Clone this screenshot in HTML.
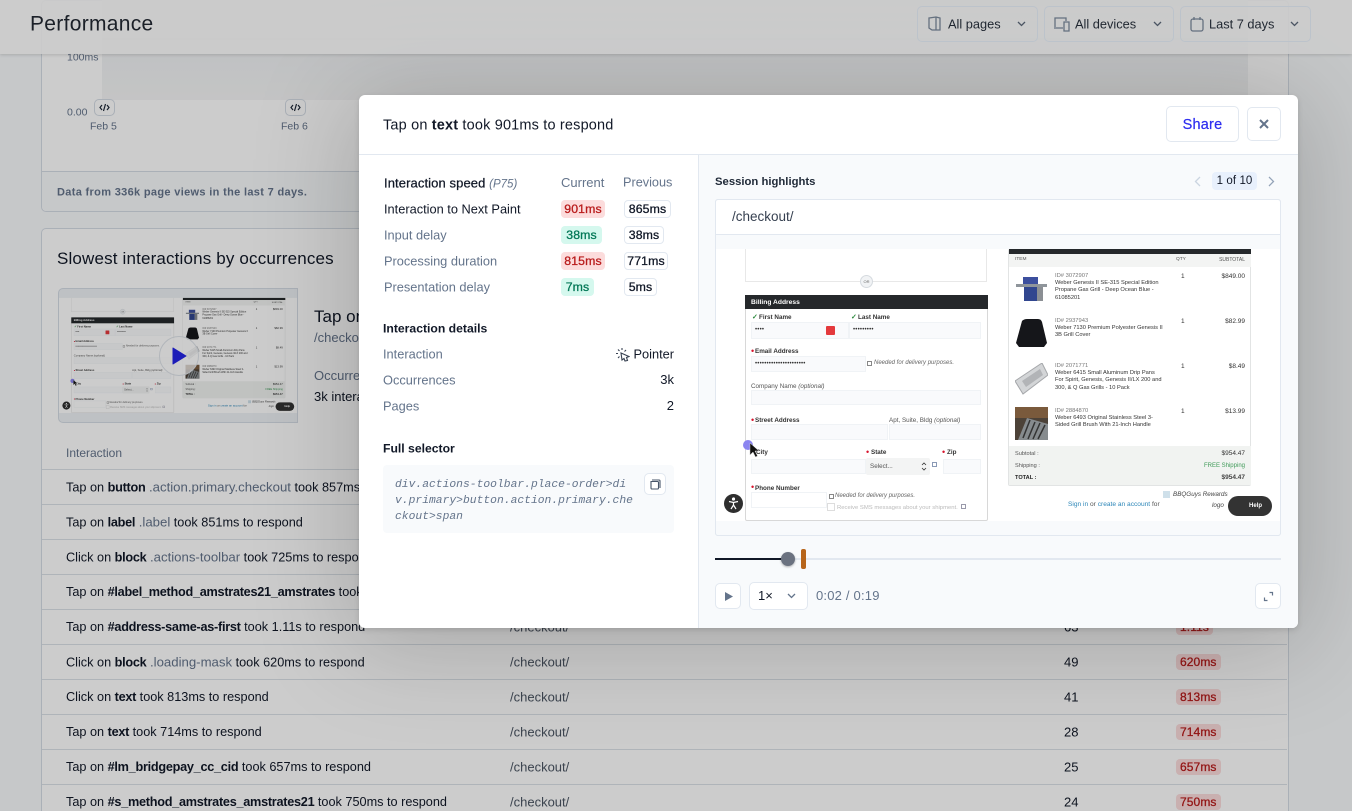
<!DOCTYPE html>
<html><head><meta charset="utf-8"><title>Performance</title>
<style>
*{box-sizing:border-box}
html,body{margin:0;padding:0;width:1352px;height:811px;overflow:hidden;background:#f8fafc;font-family:"Liberation Sans",sans-serif;color:#111827;font-size:13px}
#root{position:relative;width:1352px;height:811px;overflow:hidden;background:#f8fafc}
.t{position:absolute;white-space:nowrap;transform:translateY(-50%);line-height:1.2;letter-spacing:0}
.b{position:absolute}
b{font-weight:700}
.g{color:#64748b}
.row{position:absolute;left:42px;width:1245px;height:35px;border-bottom:1px solid #dbe1e8;font-size:12.700px}
.row b{letter-spacing:-.27px}
.row .g{font-size:13.200px}
.row .c1,.row .c2,.row .c3{position:absolute;top:50%;transform:translateY(-50%);white-space:nowrap}
.row .c1{left:24px}.row .c2{left:468px;color:#4b5563;font-size:13px}.row .c3{left:1022px;font-size:13px}
.row .bd{position:absolute;left:1134px;top:9px;height:16px;line-height:16px;padding:0 4px;border-radius:4px;background:#fcdcdc;color:#b91c1c;font-size:12px;-webkit-text-stroke:.3px #b91c1c;letter-spacing:.1px}
.bd2{position:absolute;height:18px;line-height:18px;border-radius:4px;font-size:12.300px;text-align:center;transform:translateY(-50%);-webkit-text-stroke:.3px currentColor;letter-spacing:.1px}
.red{background:#fcdcdc;color:#b91c1c}.grn{background:#d5f8ee;color:#047857}
.pv{background:#fff;border:1px solid #e2e8f0;color:#111827;line-height:16px}
.btn{position:absolute;background:#fff;border:1px solid #e2e8f0;border-radius:5px}
.flt{position:absolute;top:6px;height:36px;border:1px solid #bcc3cb;border-radius:5px}
.rp{position:absolute;overflow:hidden;background:#f8fafc;width:564px;height:300px;font-size:6px;color:#333;transform-origin:0 0}
.rp div{position:absolute}
.rp .s{position:absolute;left:0;right:0;top:14px;height:272px;background:#fff}
.rp .x{white-space:nowrap;line-height:8px}
.rp .i{background:#f9fafc;border:1px solid #f0f3f6}
.rp .l{font-weight:700;color:#333;font-size:6.300px}
.rp .o{color:#555;font-size:6.300px}
.rp .n{font-style:italic;color:#666;font-size:6px}
.rp .d{color:#d8132c;font-size:9px}
.rp .id{font-size:5.800px;color:#777;left:339px}
.rp .p{font-size:5.700px;line-height:7.300px;left:339px}
.rp .q{font-size:6.500px;left:465px}
.rp .m{font-size:6.500px;right:35px}
</style></head><body><div id="root">

<!-- PAGE -->
<div class="b" style="left:41px;top:0;width:1248px;height:212px;background:#fff;border:1px solid #d5dce5;border-radius:5px"></div>
<div class="b" style="left:102px;top:0;width:1146px;height:100px;background:linear-gradient(#eceef0,#f5f6f7)"></div>
<div class="b" style="left:102px;top:38px;width:1146px;height:2px;background:#e3e6ea"></div>
<div class="t g" style="left:67px;top:58px;font-size:10.500px">100ms</div>
<div class="t g" style="left:67px;top:113px;font-size:10.500px">0.00</div>
<div class="btn" style="left:94px;top:99px;width:21px;height:17px;border-color:#d5dce5"><svg width="19" height="15" viewBox="0 0 19 15" fill="none" stroke="#1f2937" stroke-width="1.2"><path d="M7 5 5 7.5 7 10M12 5l2 2.500-2 2.500M10.500 4 8.500 11"/></svg></div>
<div class="btn" style="left:285px;top:99px;width:21px;height:17px;border-color:#d5dce5"><svg width="19" height="15" viewBox="0 0 19 15" fill="none" stroke="#1f2937" stroke-width="1.2"><path d="M7 5 5 7.5 7 10M12 5l2 2.500-2 2.500M10.500 4 8.500 11"/></svg></div>
<div class="t g" style="left:90px;top:127px;font-size:10.500px">Feb 5</div>
<div class="t g" style="left:281px;top:127px;font-size:10.500px">Feb 6</div>
<div class="b" style="left:42px;top:171px;width:1246px;height:40px;background:#f8fafc;border-top:1px solid #d5dce5;border-radius:0 0 5px 5px"></div>
<div class="t" style="left:57px;top:193px;font-size:11px;font-weight:700;color:#64748b;letter-spacing:.33px">Data from 336k page views in the last 7 days.</div>

<div class="b" style="left:41px;top:228px;width:1248px;height:583px;background:#fff;border:1px solid #d5dce5;border-bottom:0;border-radius:5px 5px 0 0"></div>
<div class="t" style="left:57px;top:259px;font-size:17px;letter-spacing:.16px">Slowest interactions by occurrences</div>

<div class="b" style="left:58px;top:288px;width:240px;height:135px;background:#eef2f6;border:1px solid #d5dce5;border-radius:5px 0 0 5px;overflow:hidden">
  <div class="rp" style="left:0;top:3px;transform:scale(.423);background:#eef2f6">
  <div class="s"></div>
  <div style="left:29px;top:14px;width:242px;height:33px;border:1px solid #e8e8e8;border-top:0"></div>
  <div class="x" style="left:144px;top:40px;width:13px;height:13px;border-radius:50%;border:1px solid #d5dadf;background:#f1f3f5;text-align:center;line-height:11px;font-size:4px;color:#666">OR</div>
  <div style="left:29px;top:60px;width:243px;height:226px;border:1px solid #d8d8d8;border-radius:2px"></div>
  <div style="left:29px;top:60px;width:243px;height:14px;background:#25282b"></div>
  <div class="x" style="left:35px;top:64px;color:#fff;font-weight:700;font-size:6.700px">Billing Address</div>
  <div class="x" style="left:36px;top:79px;color:#2d8a3e;font-weight:700;font-size:7px">✓</div>
  <div class="x l" style="left:43px;top:79px">First Name</div>
  <div class="x" style="left:135px;top:79px;color:#2d8a3e;font-weight:700;font-size:7px">✓</div>
  <div class="x l" style="left:142px;top:79px">Last Name</div>
  <div class="i" style="left:35px;top:87px;width:98px;height:17px"></div>
  <div class="i" style="left:133px;top:87px;width:132px;height:17px"></div>
  <div class="x" style="left:39px;top:91px;letter-spacing:.2px">••••</div>
  <div class="x" style="left:137px;top:91px;letter-spacing:.2px">•••••••••</div>
  <div style="left:110px;top:91px;width:9px;height:9px;background:#e4393c;border-radius:1px"></div>
  <div class="x d" style="left:35px;top:112px">•</div>
  <div class="x l" style="left:39px;top:113px">Email Address</div>
  <div class="i" style="left:35px;top:121px;width:115px;height:16px"></div>
  <div class="x" style="left:39px;top:125px;letter-spacing:.2px">••••••••••••••••••••••</div>
  <div style="left:151px;top:126px;width:5px;height:5px;border:1px solid #888"></div>
  <div class="x n" style="left:158px;top:124px">Needed for delivery purposes.</div>
  <div class="x o" style="left:35px;top:148px">Company Name <i>(optional)</i></div>
  <div class="i" style="left:35px;top:155px;width:230px;height:15px"></div>
  <div class="x d" style="left:35px;top:181px">•</div>
  <div class="x l" style="left:39px;top:182px">Street Address</div>
  <div class="x o" style="left:173px;top:182px">Apt, Suite, Bldg <i>(optional)</i></div>
  <div class="i" style="left:35px;top:189px;width:137px;height:16px"></div>
  <div class="i" style="left:173px;top:189px;width:92px;height:16px"></div>
  <div class="x l" style="left:40px;top:214px">City</div>
  <div class="x d" style="left:150px;top:213px">•</div>
  <div class="x l" style="left:155px;top:214px">State</div>
  <div class="x d" style="left:226px;top:213px">•</div>
  <div class="x l" style="left:231px;top:214px">Zip</div>
  <div class="i" style="left:35px;top:224px;width:115px;height:15px"></div>
  <div style="left:150px;top:223px;width:64px;height:17px;background:#f3f4f4;border-radius:2px"></div>
  <div class="x o" style="left:154px;top:228px">Select...</div>
  <svg style="position:absolute;left:205px;top:226px" width="6" height="11" fill="none" stroke="#333" stroke-width=".8"><path d="M1 4l2-2 2 2M1 7l2 2 2-2"/></svg>
  <div style="left:216px;top:227px;width:5px;height:5px;border:1px solid #8a99b5"></div>
  <div class="i" style="left:227px;top:224px;width:38px;height:15px"></div>
  <div class="x d" style="left:35px;top:248px">•</div>
  <div class="x l" style="left:39px;top:250px">Phone Number</div>
  <div class="i" style="left:35px;top:257px;width:76px;height:16px;background:#fff"></div>
  <div style="left:113px;top:259px;width:5px;height:5px;border:1px solid #888"></div>
  <div class="x n" style="left:119px;top:257px">Needed for delivery purposes.</div>
  <div style="left:111px;top:268px;width:8px;height:8px;border:1px solid #ddd"></div>
  <div class="x" style="left:121px;top:269px;color:#bbb;font-size:5.900px">Receive SMS messages about your shipment.</div>
  <div style="left:245px;top:269px;width:5px;height:5px;border:1px solid #99a"></div>
  <div style="left:8px;top:259px;width:19px;height:19px;border-radius:50%;background:#2e2e2e"></div>
  <svg style="position:absolute;left:10px;top:261px" width="15" height="15" fill="none" stroke="#fff" stroke-width="1.200"><circle cx="7.500" cy="3" r="1" fill="#fff"/><path d="M3 5.500 7.500 6.500 12 5.500M7.500 6.500V9M7.500 9 5 13M7.500 9 10 13"/></svg>
  <div style="left:27px;top:205px;width:10px;height:10px;border-radius:50%;background:#8b85f0"></div>
  <svg style="position:absolute;left:32px;top:207px" width="12" height="17"><path d="M2 1V13L5 10 7.500 15 9.500 14 7 9H11z" fill="#111" stroke="#ccc" stroke-width=".5"/></svg>
  <div style="left:292px;top:14px;width:243px;height:237px;border:1px solid #e2e4e4;border-radius:2px"></div>
  <div style="left:293px;top:14px;width:242px;height:5px;background:#25282b"></div>
  <div style="left:293px;top:19px;width:242px;height:13px;background:#f3f4f3"></div>
  <div class="x" style="left:299px;top:21px;font-size:4.800px;color:#555">ITEM</div>
  <div class="x" style="left:460px;top:21px;font-size:4.800px;color:#555">QTY</div>
  <div class="x" style="right:35px;top:21px;font-size:5px;color:#555">SUBTOTAL</div>
  <svg style="position:absolute;left:299px;top:38px" width="33" height="30"><rect x="8" y="4" width="15" height="8" fill="#3c4f9e"/><rect x="1" y="11" width="31" height="3" fill="#8f959b"/><rect x="9" y="14" width="13" height="14" fill="#31468f"/><rect x="22" y="14" width="6" height="14" fill="#8b8f94"/></svg>
  <div class="x id" style="top:37px">ID# 3072907</div>
  <div class="x p" style="top:45px">Weber Genesis II SE-315 Special Edition<br>Propane Gas Grill - Deep Ocean Blue -<br>61085201</div>
  <div class="x q" style="top:38px">1</div>
  <div class="x m" style="top:38px">$849.00</div>
  <svg style="position:absolute;left:299px;top:84px" width="33" height="29"><path d="M7 2Q9 0 12 0H23Q26 0 27 3L32 24 29 28H4L1 24z" fill="#15161a"/></svg>
  <div class="x id" style="top:82px">ID# 2937943</div>
  <div class="x p" style="top:90px">Weber 7130 Premium Polyester Genesis II<br>3B Grill Cover</div>
  <div class="x q" style="top:83px">1</div>
  <div class="x m" style="top:83px">$82.99</div>
  <svg style="position:absolute;left:299px;top:128px" width="33" height="32"><path d="M0 18 27 0 33 12 8 31z" fill="#d3d5d7" stroke="#a5a7aa"/><path d="M7 18 25 6 28 12 11 24z" fill="#b2b4b7"/></svg>
  <div class="x id" style="top:127px">ID# 2071771</div>
  <div class="x p" style="top:135px">Weber 6415 Small Aluminum Drip Pans<br>For Spirit, Genesis, Genesis II/LX 200 and<br>300, &amp; Q Gas Grills - 10 Pack</div>
  <div class="x q" style="top:128px">1</div>
  <div class="x m" style="top:128px">$8.49</div>
  <svg style="position:absolute;left:299px;top:172px" width="33" height="33"><rect width="33" height="33" fill="#4c4238"/><rect width="33" height="11" fill="#7a5a3c"/><path d="M3 33 12 11 33 17V33z" fill="#868b8e"/><path d="M8 31 15 13M13 32 20 15M18 32 25 16M23 32 30 18" stroke="#333" stroke-width="1.500"/></svg>
  <div class="x id" style="top:172px">ID# 2884870</div>
  <div class="x p" style="top:180px">Weber 6493 Original Stainless Steel 3-<br>Sided Grill Brush With 21-Inch Handle</div>
  <div class="x q" style="top:173px">1</div>
  <div class="x m" style="top:173px">$13.99</div>
  <div style="left:293px;top:211px;width:242px;height:39px;background:#f1f3f1"></div>
  <div class="x" style="left:299px;top:215px;font-size:5.600px;color:#555">Subtotal :</div>
  <div class="x m" style="top:215px">$954.47</div>
  <div class="x" style="left:299px;top:227px;font-size:5.600px;color:#555">Shipping :</div>
  <div class="x" style="right:35px;top:227px;font-size:6px;color:#3f9a58">FREE Shipping</div>
  <div class="x" style="left:299px;top:239px;font-size:5.600px;font-weight:700;color:#222">TOTAL :</div>
  <div class="x m" style="top:239px;font-weight:700;color:#444">$954.47</div>
  <div class="x" style="left:352px;top:266px;font-size:6.600px;color:#555"><span style="color:#2c86b8">Sign in</span> or <span style="color:#2c86b8">create an account</span> for</div>
  <div style="left:447px;top:256px;width:7px;height:7px;background:#cfe0ea"></div>
  <div class="x" style="left:457px;top:256px;font-size:6.300px;font-style:italic;color:#444">BBQGuys Rewards</div>
  <div class="x" style="left:496px;top:267px;font-size:6.300px;font-style:italic;color:#444">logo</div>
  <div style="left:512px;top:261px;width:44px;height:20px;border-radius:10px;background:#333"></div>
  <div class="x" style="left:533px;top:267px;font-size:6px;font-weight:700;color:#fff">Help</div>
  </div>
  <div class="b" style="left:100px;top:47px;width:40px;height:40px;border-radius:50%;background:rgba(255,255,255,.75);border:1px solid #dfe4ea"></div>
  <svg class="b" style="left:112px;top:58px" width="18" height="18"><path d="M2 1 15 9 2 17z" fill="#2424e6" stroke="#2424e6" stroke-linejoin="round"/></svg>
</div>
<div class="t" style="left:314px;top:317px;font-size:17px">Tap on text</div>
<div class="t g" style="left:314px;top:338px">/checkout/</div>
<div class="t g" style="left:314px;top:376px">Occurrences</div>
<div class="t" style="left:314px;top:397px">3k interactions</div>

<div class="b" style="left:42px;top:469px;width:1245px;height:1px;background:#dbe1e8"></div>
<div class="t g" style="left:66px;top:453px;font-size:12px">Interaction</div>

<div class="row" style="top:470px"><span class="c1">Tap on <b>button</b> <span class="g">.action.primary.checkout</span> took 857ms to respond</span></div>
<div class="row" style="top:505px"><span class="c1">Tap on <b>label</b> <span class="g">.label</span> took 851ms to respond</span></div>
<div class="row" style="top:540px"><span class="c1">Click on <b>block</b> <span class="g">.actions-toolbar</span> took 725ms to respond</span></div>
<div class="row" style="top:575px"><span class="c1">Tap on <b>#label_method_amstrates21_amstrates</b> took 901ms to respond</span></div>
<div class="row" style="top:610px"><span class="c1">Tap on <b>#address-same-as-first</b> took 1.11s to respond</span><span class="c2">/checkout/</span><span class="c3">63</span><span class="bd">1.11s</span></div>
<div class="row" style="top:645px"><span class="c1">Click on <b>block</b> <span class="g">.loading-mask</span> took 620ms to respond</span><span class="c2">/checkout/</span><span class="c3">49</span><span class="bd">620ms</span></div>
<div class="row" style="top:680px"><span class="c1">Click on <b>text</b> took 813ms to respond</span><span class="c2">/checkout/</span><span class="c3">41</span><span class="bd">813ms</span></div>
<div class="row" style="top:715px"><span class="c1">Tap on <b>text</b> took 714ms to respond</span><span class="c2">/checkout/</span><span class="c3">28</span><span class="bd">714ms</span></div>
<div class="row" style="top:750px"><span class="c1">Tap on <b>#lm_bridgepay_cc_cid</b> took 657ms to respond</span><span class="c2">/checkout/</span><span class="c3">25</span><span class="bd">657ms</span></div>
<div class="row" style="top:785px;height:26px;border-bottom:0"><span class="c1" style="top:17px">Tap on <b>#s_method_amstrates_amstrates21</b> took 750ms to respond</span><span class="c2" style="top:17px">/checkout/</span><span class="c3" style="top:17px">24</span><span class="bd">750ms</span></div>

<!-- OVERLAY -->
<div class="b" style="left:0;top:0;width:1352px;height:811px;background:rgba(0,0,0,.2)"></div>
<div class="b" style="left:359px;top:95px;width:939px;height:533px;border-radius:6px;box-shadow:0 10px 100px 10px rgba(0,0,0,.18),0 2px 6px rgba(0,0,0,.12)"></div>

<!-- HEADER -->
<div class="b" style="left:0;top:0;width:1352px;height:54px;background:rgba(204,204,204,.9);box-shadow:0 1px 3px rgba(0,0,0,.15)"></div>
<div class="t" style="left:30px;top:24px;font-size:21px;color:#1b2028;letter-spacing:.3px">Performance</div>
<div class="flt" style="left:917px;width:121px"></div>
<svg class="b" style="left:927px;top:15px" width="16" height="18" fill="none" stroke="#64707f" stroke-width="1.3"><path d="M2 3 9 2 13 3V15H5L2 13zM9 2V15"/></svg>
<div class="t" style="left:948px;top:24px;color:#1f2630;font-size:12.800px">All pages</div>
<svg class="b" style="left:1017px;top:21px" width="9" height="6" fill="none" stroke="#4b5563" stroke-width="1.3"><path d="M1 1l3.500 3.500L8 1"/></svg>
<div class="flt" style="left:1044px;width:130px"></div>
<svg class="b" style="left:1053px;top:15px" width="18" height="18" fill="none" stroke="#64707f" stroke-width="1.3"><path d="M2 12V3H13V6M1 13H10M11 7H16V16H11z"/></svg>
<div class="t" style="left:1075px;top:24px;color:#1f2630;font-size:12.800px">All devices</div>
<svg class="b" style="left:1153px;top:21px" width="9" height="6" fill="none" stroke="#4b5563" stroke-width="1.3"><path d="M1 1l3.500 3.500L8 1"/></svg>
<div class="flt" style="left:1180px;width:131px"></div>
<svg class="b" style="left:1189px;top:15px" width="16" height="18" fill="none" stroke="#64707f" stroke-width="1.3"><rect x="2" y="4" width="12" height="12" rx="2"/><path d="M5 2V5M11 2V5"/></svg>
<div class="t" style="left:1209px;top:24px;color:#1f2630;font-size:12.800px">Last 7 days</div>
<svg class="b" style="left:1290px;top:21px" width="9" height="6" fill="none" stroke="#4b5563" stroke-width="1.3"><path d="M1 1l3.500 3.500L8 1"/></svg>

<!-- MODAL -->
<div class="b" style="left:359px;top:95px;width:939px;height:533px;background:#fff;border-radius:6px;overflow:hidden">
  <div class="b" style="left:339px;top:59px;width:600px;height:474px;background:#f8fafc;border-left:1px solid #e2e8f0"></div>
  <div class="b" style="left:0;top:59px;width:939px;height:1px;background:#e2e8f0"></div>
</div>
<div class="t" style="left:383px;top:126px;font-size:14.500px;color:#111827;letter-spacing:.17px">Tap on <b>text</b> took 901ms to respond</div>
<div class="btn" style="left:1166px;top:106px;width:73px;height:36px;text-align:center;line-height:37px;color:#2d2df0;font-size:14.500px;letter-spacing:.2px;-webkit-text-stroke:.2px #2d2df0">Share</div>
<div class="btn" style="left:1247px;top:107px;width:34px;height:34px"><svg class="b" style="left:11px;top:11px" width="10" height="10" stroke="#64748b" stroke-width="2"><path d="M1 1l8 8M9 1l-8 8"/></svg></div>

<div class="t" style="left:384px;top:184px;letter-spacing:.1px;-webkit-text-stroke:.25px #111827">Interaction speed <i class="g" style="font-size:11.500px;-webkit-text-stroke:0;letter-spacing:0">(P75)</i></div>
<div class="t g" style="left:561px;top:183px">Current</div>
<div class="t g" style="left:623px;top:183px;font-size:12.700px">Previous</div>
<div class="t" style="left:384px;top:209px;font-size:12.800px">Interaction to Next Paint</div>
<div class="t g" style="left:384px;top:235px;font-size:12.800px">Input delay</div>
<div class="t g" style="left:384px;top:261px;font-size:12.800px">Processing duration</div>
<div class="t g" style="left:384px;top:287px;font-size:12.800px">Presentation delay</div>
<div class="bd2 red" style="left:561px;top:209px;width:44px">901ms</div>
<div class="bd2 pv" style="left:624px;top:209px;width:47px">865ms</div>
<div class="bd2 grn" style="left:561px;top:235px;width:41px">38ms</div>
<div class="bd2 pv" style="left:624px;top:235px;width:40px">38ms</div>
<div class="bd2 red" style="left:561px;top:261px;width:44px">815ms</div>
<div class="bd2 pv" style="left:624px;top:261px;width:44px">771ms</div>
<div class="bd2 grn" style="left:561px;top:287px;width:33px">7ms</div>
<div class="bd2 pv" style="left:624px;top:287px;width:33px">5ms</div>

<div class="t" style="left:383px;top:329px;font-weight:700;font-size:12.200px">Interaction details</div>
<div class="t g" style="left:383px;top:354px;font-size:12.800px">Interaction</div>
<svg class="b" style="left:615px;top:347px" width="15" height="15" fill="none" stroke="#374151" stroke-width="1.100"><path d="M7 1V3M3 2.500 4.500 4M1 6.500H3M3 11 4.500 9.500M11 3 9.500 4.500"/><path d="M6 6 14 9.500 11.500 10.500 12.500 13.500 10 14 9 11.500 7 13z"/></svg>
<div class="t" style="right:678px;top:354px;font-size:12.800px">Pointer</div>
<div class="t g" style="left:383px;top:380px;font-size:12.800px">Occurrences</div>
<div class="t" style="right:678px;top:380px">3k</div>
<div class="t g" style="left:383px;top:406px;font-size:12.800px">Pages</div>
<div class="t" style="right:678px;top:406px">2</div>
<div class="t" style="left:383px;top:449px;font-weight:700;font-size:12.200px">Full selector</div>
<div class="b" style="left:383px;top:465px;width:291px;height:68px;background:#f8fafc;border-radius:4px"></div>
<div class="t" style="left:395px;top:485px;font:italic 11.330px 'Liberation Mono',monospace;color:#64748b">div.actions-toolbar.place-order&gt;di</div>
<div class="t" style="left:395px;top:501px;font:italic 11.330px 'Liberation Mono',monospace;color:#64748b">v.primary&gt;button.action.primary.che</div>
<div class="t" style="left:395px;top:517px;font:italic 11.330px 'Liberation Mono',monospace;color:#64748b">ckout&gt;span</div>
<div class="btn" style="left:644px;top:473px;width:22px;height:22px"><svg class="b" style="left:4px;top:4px" width="13" height="13" fill="none" stroke="#475569" stroke-width="1.100"><path d="M3 2h7a1 1 0 0 1 1 1v7M2 3.500h6.500a1 1 0 0 1 1 1V10a1 1 0 0 1-1 1H3a1 1 0 0 1-1-1z"/></svg></div>

<div class="t" style="left:715px;top:183px;font-weight:700;font-size:11.300px;color:#1f2937">Session highlights</div>
<svg class="b" style="left:1194px;top:176px" width="8" height="11" fill="none" stroke="#cbd5e1" stroke-width="1.300"><path d="M6 1 1.500 5.500 6 10"/></svg>
<div class="b" style="left:1212px;top:172px;width:45px;height:18px;background:#e8f0fc;border-radius:4px;text-align:center;line-height:18px;font-size:11.500px;color:#111827;letter-spacing:.1px">1 of 10</div>
<svg class="b" style="left:1267px;top:176px" width="8" height="11" fill="none" stroke="#94a3b8" stroke-width="1.300"><path d="M2 1l4.500 4.500L2 10"/></svg>

<div class="b" style="left:715px;top:199px;width:566px;height:337px;background:#fff;border:1px solid #e2e8f0;border-radius:3px"></div>
<div class="b" style="left:716px;top:234px;width:564px;height:1px;background:#e2e8f0"></div>
<div class="t" style="left:732px;top:217px;color:#374151;font-size:13.500px">/checkout/</div>

<!-- REPLICA: origin page (716,235) -->
<div class="rp" style="left:716px;top:235px">
  <div class="s"></div>
  <div style="left:29px;top:14px;width:242px;height:33px;border:1px solid #e8e8e8;border-top:0"></div>
  <div class="x" style="left:144px;top:40px;width:13px;height:13px;border-radius:50%;border:1px solid #d5dadf;background:#f1f3f5;text-align:center;line-height:11px;font-size:4px;color:#666">OR</div>
  <div style="left:29px;top:60px;width:243px;height:226px;border:1px solid #d8d8d8;border-radius:2px"></div>
  <div style="left:29px;top:60px;width:243px;height:14px;background:#25282b"></div>
  <div class="x" style="left:35px;top:64px;color:#fff;font-weight:700;font-size:6.700px">Billing Address</div>
  <div class="x" style="left:36px;top:79px;color:#2d8a3e;font-weight:700;font-size:7px">✓</div>
  <div class="x l" style="left:43px;top:79px">First Name</div>
  <div class="x" style="left:135px;top:79px;color:#2d8a3e;font-weight:700;font-size:7px">✓</div>
  <div class="x l" style="left:142px;top:79px">Last Name</div>
  <div class="i" style="left:35px;top:87px;width:98px;height:17px"></div>
  <div class="i" style="left:133px;top:87px;width:132px;height:17px"></div>
  <div class="x" style="left:39px;top:91px;letter-spacing:.2px">••••</div>
  <div class="x" style="left:137px;top:91px;letter-spacing:.2px">•••••••••</div>
  <div style="left:110px;top:91px;width:9px;height:9px;background:#e4393c;border-radius:1px"></div>
  <div class="x d" style="left:35px;top:112px">•</div>
  <div class="x l" style="left:39px;top:113px">Email Address</div>
  <div class="i" style="left:35px;top:121px;width:115px;height:16px"></div>
  <div class="x" style="left:39px;top:125px;letter-spacing:.2px">••••••••••••••••••••••</div>
  <div style="left:151px;top:126px;width:5px;height:5px;border:1px solid #888"></div>
  <div class="x n" style="left:158px;top:124px">Needed for delivery purposes.</div>
  <div class="x o" style="left:35px;top:148px">Company Name <i>(optional)</i></div>
  <div class="i" style="left:35px;top:155px;width:230px;height:15px"></div>
  <div class="x d" style="left:35px;top:181px">•</div>
  <div class="x l" style="left:39px;top:182px">Street Address</div>
  <div class="x o" style="left:173px;top:182px">Apt, Suite, Bldg <i>(optional)</i></div>
  <div class="i" style="left:35px;top:189px;width:137px;height:16px"></div>
  <div class="i" style="left:173px;top:189px;width:92px;height:16px"></div>
  <div class="x l" style="left:40px;top:214px">City</div>
  <div class="x d" style="left:150px;top:213px">•</div>
  <div class="x l" style="left:155px;top:214px">State</div>
  <div class="x d" style="left:226px;top:213px">•</div>
  <div class="x l" style="left:231px;top:214px">Zip</div>
  <div class="i" style="left:35px;top:224px;width:115px;height:15px"></div>
  <div style="left:150px;top:223px;width:64px;height:17px;background:#f3f4f4;border-radius:2px"></div>
  <div class="x o" style="left:154px;top:228px">Select...</div>
  <svg style="position:absolute;left:205px;top:226px" width="6" height="11" fill="none" stroke="#333" stroke-width=".8"><path d="M1 4l2-2 2 2M1 7l2 2 2-2"/></svg>
  <div style="left:216px;top:227px;width:5px;height:5px;border:1px solid #8a99b5"></div>
  <div class="i" style="left:227px;top:224px;width:38px;height:15px"></div>
  <div class="x d" style="left:35px;top:248px">•</div>
  <div class="x l" style="left:39px;top:250px">Phone Number</div>
  <div class="i" style="left:35px;top:257px;width:76px;height:16px;background:#fff"></div>
  <div style="left:113px;top:259px;width:5px;height:5px;border:1px solid #888"></div>
  <div class="x n" style="left:119px;top:257px">Needed for delivery purposes.</div>
  <div style="left:111px;top:268px;width:8px;height:8px;border:1px solid #ddd"></div>
  <div class="x" style="left:121px;top:269px;color:#bbb;font-size:5.900px">Receive SMS messages about your shipment.</div>
  <div style="left:245px;top:269px;width:5px;height:5px;border:1px solid #99a"></div>
  <div style="left:8px;top:259px;width:19px;height:19px;border-radius:50%;background:#2e2e2e"></div>
  <svg style="position:absolute;left:10px;top:261px" width="15" height="15" fill="none" stroke="#fff" stroke-width="1.200"><circle cx="7.500" cy="3" r="1" fill="#fff"/><path d="M3 5.500 7.500 6.500 12 5.500M7.500 6.500V9M7.500 9 5 13M7.500 9 10 13"/></svg>
  <div style="left:27px;top:205px;width:10px;height:10px;border-radius:50%;background:#8b85f0"></div>
  <svg style="position:absolute;left:32px;top:207px" width="12" height="17"><path d="M2 1V13L5 10 7.500 15 9.500 14 7 9H11z" fill="#111" stroke="#ccc" stroke-width=".5"/></svg>
  <div style="left:292px;top:14px;width:243px;height:237px;border:1px solid #e2e4e4;border-radius:2px"></div>
  <div style="left:293px;top:14px;width:242px;height:5px;background:#25282b"></div>
  <div style="left:293px;top:19px;width:242px;height:13px;background:#f3f4f3"></div>
  <div class="x" style="left:299px;top:21px;font-size:4.800px;color:#555">ITEM</div>
  <div class="x" style="left:460px;top:21px;font-size:4.800px;color:#555">QTY</div>
  <div class="x" style="right:35px;top:21px;font-size:5px;color:#555">SUBTOTAL</div>
  <svg style="position:absolute;left:299px;top:38px" width="33" height="30"><rect x="8" y="4" width="15" height="8" fill="#3c4f9e"/><rect x="1" y="11" width="31" height="3" fill="#8f959b"/><rect x="9" y="14" width="13" height="14" fill="#31468f"/><rect x="22" y="14" width="6" height="14" fill="#8b8f94"/></svg>
  <div class="x id" style="top:37px">ID# 3072907</div>
  <div class="x p" style="top:45px">Weber Genesis II SE-315 Special Edition<br>Propane Gas Grill - Deep Ocean Blue -<br>61085201</div>
  <div class="x q" style="top:38px">1</div>
  <div class="x m" style="top:38px">$849.00</div>
  <svg style="position:absolute;left:299px;top:84px" width="33" height="29"><path d="M7 2Q9 0 12 0H23Q26 0 27 3L32 24 29 28H4L1 24z" fill="#15161a"/></svg>
  <div class="x id" style="top:82px">ID# 2937943</div>
  <div class="x p" style="top:90px">Weber 7130 Premium Polyester Genesis II<br>3B Grill Cover</div>
  <div class="x q" style="top:83px">1</div>
  <div class="x m" style="top:83px">$82.99</div>
  <svg style="position:absolute;left:299px;top:128px" width="33" height="32"><path d="M0 18 27 0 33 12 8 31z" fill="#d3d5d7" stroke="#a5a7aa"/><path d="M7 18 25 6 28 12 11 24z" fill="#b2b4b7"/></svg>
  <div class="x id" style="top:127px">ID# 2071771</div>
  <div class="x p" style="top:135px">Weber 6415 Small Aluminum Drip Pans<br>For Spirit, Genesis, Genesis II/LX 200 and<br>300, &amp; Q Gas Grills - 10 Pack</div>
  <div class="x q" style="top:128px">1</div>
  <div class="x m" style="top:128px">$8.49</div>
  <svg style="position:absolute;left:299px;top:172px" width="33" height="33"><rect width="33" height="33" fill="#4c4238"/><rect width="33" height="11" fill="#7a5a3c"/><path d="M3 33 12 11 33 17V33z" fill="#868b8e"/><path d="M8 31 15 13M13 32 20 15M18 32 25 16M23 32 30 18" stroke="#333" stroke-width="1.500"/></svg>
  <div class="x id" style="top:172px">ID# 2884870</div>
  <div class="x p" style="top:180px">Weber 6493 Original Stainless Steel 3-<br>Sided Grill Brush With 21-Inch Handle</div>
  <div class="x q" style="top:173px">1</div>
  <div class="x m" style="top:173px">$13.99</div>
  <div style="left:293px;top:211px;width:242px;height:39px;background:#f1f3f1"></div>
  <div class="x" style="left:299px;top:215px;font-size:5.600px;color:#555">Subtotal :</div>
  <div class="x m" style="top:215px">$954.47</div>
  <div class="x" style="left:299px;top:227px;font-size:5.600px;color:#555">Shipping :</div>
  <div class="x" style="right:35px;top:227px;font-size:6px;color:#3f9a58">FREE Shipping</div>
  <div class="x" style="left:299px;top:239px;font-size:5.600px;font-weight:700;color:#222">TOTAL :</div>
  <div class="x m" style="top:239px;font-weight:700;color:#444">$954.47</div>
  <div class="x" style="left:352px;top:266px;font-size:6.600px;color:#555"><span style="color:#2c86b8">Sign in</span> or <span style="color:#2c86b8">create an account</span> for</div>
  <div style="left:447px;top:256px;width:7px;height:7px;background:#cfe0ea"></div>
  <div class="x" style="left:457px;top:256px;font-size:6.300px;font-style:italic;color:#444">BBQGuys Rewards</div>
  <div class="x" style="left:496px;top:267px;font-size:6.300px;font-style:italic;color:#444">logo</div>
  <div style="left:512px;top:261px;width:44px;height:20px;border-radius:10px;background:#333"></div>
  <div class="x" style="left:533px;top:267px;font-size:6px;font-weight:700;color:#fff">Help</div>
</div>
<div class="b" style="left:715px;top:199px;width:566px;height:337px;border:1px solid #e2e8f0;border-radius:3px"></div>

<!-- PLAYER -->
<div class="b" style="left:715px;top:558px;width:566px;height:2px;background:#e2e8f0"></div>
<div class="b" style="left:715px;top:558px;width:70px;height:2px;background:#111827"></div>
<div class="b" style="left:781px;top:552px;width:14px;height:14px;border-radius:50%;background:#6b7280;box-shadow:0 1px 2px rgba(0,0,0,.3)"></div>
<div class="b" style="left:801px;top:549px;width:5px;height:20px;border-radius:2px;background:#b7651b"></div>
<div class="btn" style="left:715px;top:583px;width:26px;height:26px"><svg class="b" style="left:8px;top:7px" width="10" height="11"><path d="M1 1 9 5.500 1 10z" fill="#64748b"/></svg></div>
<div class="btn" style="left:749px;top:582px;width:59px;height:28px"></div>
<div class="t" style="left:758px;top:596px">1×</div>
<svg class="b" style="left:787px;top:593px" width="9" height="6" fill="none" stroke="#64748b" stroke-width="1.300"><path d="M1 1l3.500 3.500L8 1"/></svg>
<div class="t g" style="left:816px;top:596px;letter-spacing:.2px">0:02 / 0:19</div>
<div class="btn" style="left:1255px;top:583px;width:26px;height:26px"><svg class="b" style="left:7px;top:7px" width="11" height="11" fill="none" stroke="#64748b" stroke-width="1.200"><path d="M6.500 1.500H9.500V4.500M4.500 9.500H1.500V6.500"/></svg></div>

</div></body></html>
